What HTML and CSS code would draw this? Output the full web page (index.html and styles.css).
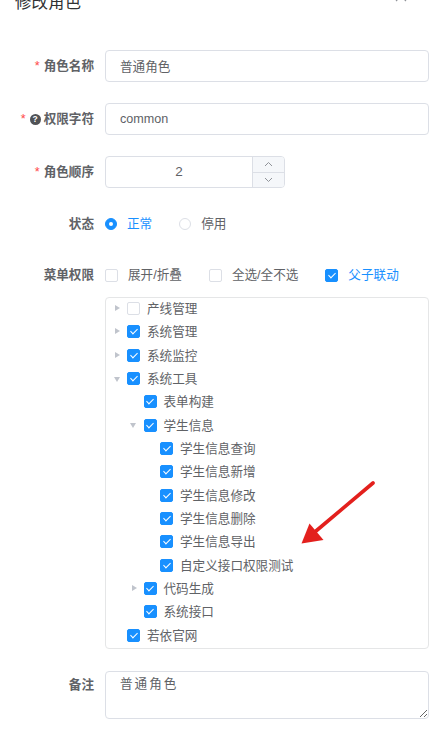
FILE: index.html
```html
<!DOCTYPE html>
<html lang="zh-CN">
<head>
<meta charset="utf-8">
<title>修改角色</title>
<link rel="stylesheet" href="styles.css">
</head>
<body>
<div class="dialog">
  <div class="header">
    <span class="title">修改角色</span>
    <svg class="close" width="12" height="12" viewBox="0 0 12 12"><path d="M1 1 L11 11 M11 1 L1 11" stroke="#909399" stroke-width="1.2" fill="none"/></svg>
  </div>

  <div class="form">
    <div class="item">
      <div class="label"><span class="req">*</span>角色名称</div>
      <div class="content"><input class="input" value="普通角色"></div>
    </div>

    <div class="item">
      <div class="label"><span class="req">*</span><span class="qicon">?</span>权限字符</div>
      <div class="content"><input class="input" value="common"></div>
    </div>

    <div class="item">
      <div class="label"><span class="req">*</span>角色顺序</div>
      <div class="content">
        <div class="number">
          <div class="num-value">2</div>
          <div class="num-btns">
            <div class="num-btn"><svg width="9" height="6" viewBox="0 0 9 6"><path d="M1 5 L4.5 1.5 L8 5" stroke="#909399" stroke-width="1" fill="none"/></svg></div>
            <div class="num-btn"><svg width="9" height="6" viewBox="0 0 9 6"><path d="M1 1 L4.5 4.5 L8 1" stroke="#909399" stroke-width="1" fill="none"/></svg></div>
          </div>
        </div>
      </div>
    </div>

    <div class="item status-item">
      <div class="label">状态</div>
      <div class="content options">
        <span class="radio on"></span><span class="opt-text active">正常</span>
        <span class="radio"></span><span class="opt-text">停用</span>
      </div>
    </div>

    <div class="item menu-item">
      <div class="label short">菜单权限</div>
      <div class="content">
        <div class="options short">
          <span class="cb"></span><span class="opt-text">展开/折叠</span>
          <span class="cb"></span><span class="opt-text">全选/全不选</span>
          <span class="cb on"></span><span class="opt-text active">父子联动</span>
        </div>
        <div class="tree">
          <div class="node"><span class="arrow right"></span><span class="cb"></span><span class="ntext">产线管理</span></div>
          <div class="node"><span class="arrow right"></span><span class="cb on"></span><span class="ntext">系统管理</span></div>
          <div class="node"><span class="arrow right"></span><span class="cb on"></span><span class="ntext">系统监控</span></div>
          <div class="node"><span class="arrow down"></span><span class="cb on"></span><span class="ntext">系统工具</span></div>
          <div class="node lv2"><span class="arrow"></span><span class="cb on"></span><span class="ntext">表单构建</span></div>
          <div class="node lv2"><span class="arrow down"></span><span class="cb on"></span><span class="ntext">学生信息</span></div>
          <div class="node lv3"><span class="arrow"></span><span class="cb on"></span><span class="ntext">学生信息查询</span></div>
          <div class="node lv3"><span class="arrow"></span><span class="cb on"></span><span class="ntext">学生信息新增</span></div>
          <div class="node lv3"><span class="arrow"></span><span class="cb on"></span><span class="ntext">学生信息修改</span></div>
          <div class="node lv3"><span class="arrow"></span><span class="cb on"></span><span class="ntext">学生信息删除</span></div>
          <div class="node lv3"><span class="arrow"></span><span class="cb on"></span><span class="ntext">学生信息导出</span></div>
          <div class="node lv3"><span class="arrow"></span><span class="cb on"></span><span class="ntext">自定义接口权限测试</span></div>
          <div class="node lv2"><span class="arrow right"></span><span class="cb on"></span><span class="ntext">代码生成</span></div>
          <div class="node lv2"><span class="arrow"></span><span class="cb on"></span><span class="ntext">系统接口</span></div>
          <div class="node"><span class="arrow"></span><span class="cb on"></span><span class="ntext">若依官网</span></div>
        </div>
      </div>
    </div>

    <div class="item">
      <div class="label remark">备注</div>
      <div class="content"><textarea class="textarea">普通角色</textarea></div>
    </div>
  </div>

  <svg class="annot" width="447" height="730" viewBox="0 0 447 730">
    <line x1="373" y1="493" x2="316" y2="541" stroke="#e3201d" stroke-width="3.6" stroke-linecap="round"/>
    <polygon points="301.5,553.5 309.5,533.5 323.5,550" fill="#e3201d"/>
  </svg>
</div>
</body>
</html>
```

FILE: styles.css
```css
* { box-sizing: border-box; }

html, body {
  margin: 0;
  padding: 0;
  background: #fff;
  overflow: hidden;
}

body {
  font-family: "Liberation Sans", "Noto Sans CJK SC", sans-serif;
  font-size: 12.6px;
  color: #606266;
}

.dialog {
  position: relative;
  width: 447px;
  height: 730px;
  padding-right: 18px;
}

.header {
  position: relative;
  margin-top: -10px;
  height: 25px;
  line-height: 24px;
  padding-left: 15px;
}

.title {
  font-size: 16.5px;
  color: #303133;
}

.close {
  position: absolute;
  right: 22px;
  top: 0;
}

.form {
  padding-top: 35px;
}

.item {
  display: flex;
  margin-bottom: 21px;
}

.status-item {
  margin-top: -1px;
}

.menu-item {
  margin-bottom: 22px;
}

.label {
  width: 105px;
  flex: none;
  padding-right: 11px;
  text-align: right;
  line-height: 30px;
  font-weight: bold;
  color: #606266;
  display: flex;
  justify-content: flex-end;
  align-items: center;
  height: 32px;
}

.label.short {
  height: 28px;
  line-height: 26px;
}

.label.remark {
  height: 28px;
}

.req {
  color: #ff4949;
  margin-right: 4px;
  font-weight: normal;
}

.qicon {
  display: inline-flex;
  width: 11px;
  height: 11px;
  border-radius: 50%;
  background: #505256;
  color: #fff;
  font-size: 8.5px;
  font-weight: bold;
  line-height: 11px;
  justify-content: center;
  align-items: center;
  margin-right: 3px;
}

.content {
  flex: 1;
  min-width: 0;
}

.input {
  display: block;
  width: 100%;
  height: 32px;
  border: 1px solid #dcdfe6;
  border-radius: 4px;
  padding: 0 14px 1px;
  font-family: inherit;
  font-size: 12.6px;
  color: #606266;
  outline: none;
  background: #fff;
}

.number {
  display: flex;
  width: 180px;
  height: 32px;
  border: 1px solid #dcdfe6;
  border-radius: 4px;
  overflow: hidden;
}

.num-value {
  flex: 1;
  text-align: center;
  line-height: 29px;
  font-size: 13.5px;
  color: #606266;
}

.num-btns {
  width: 32px;
  display: flex;
  flex-direction: column;
  border-left: 1px solid #dcdfe6;
  background: #f5f7fa;
}

.num-btn {
  flex: 1;
  display: flex;
  align-items: center;
  justify-content: center;
}

.num-btn + .num-btn {
  border-top: 1px solid #dcdfe6;
}

.options {
  display: flex;
  align-items: center;
  height: 32px;
}

.options.short {
  height: 28px;
}

.opt-text {
  margin-left: 10px;
  margin-right: 27px;
  color: #606266;
  position: relative;
  top: -1.5px;
}

.opt-text.active {
  color: #1890ff;
}

.radio {
  flex: none;
  width: 12px;
  height: 12px;
  border-radius: 50%;
  border: 1px solid #dcdfe6;
  background: #fff;
  position: relative;
}

.radio.on {
  border-color: #1890ff;
  background: #1890ff;
}

.radio.on::after {
  content: "";
  position: absolute;
  left: 3px;
  top: 3px;
  width: 4px;
  height: 4px;
  border-radius: 50%;
  background: #fff;
}

.cb {
  flex: none;
  width: 13px;
  height: 13px;
  border: 1px solid #dcdfe6;
  border-radius: 2px;
  background: #fff;
  position: relative;
}

.cb.on {
  background: #1890ff;
  border-color: #1890ff;
}

.cb.on::after {
  content: "";
  position: absolute;
  left: 3.5px;
  top: 1px;
  width: 3px;
  height: 6px;
  border: 1px solid #fff;
  border-left: 0;
  border-top: 0;
  transform: rotate(45deg);
}

.tree {
  margin-top: 8px;
  border: 1px solid #e5e6e7;
  border-radius: 4px;
  background: #fff;
}

.node {
  display: flex;
  align-items: center;
  height: 23.33px;
  position: relative;
  top: -1px;
}

.node.lv2 { padding-left: 16.5px; }
.node.lv3 { padding-left: 33px; }

.arrow {
  flex: none;
  width: 21px;
  height: 10px;
  position: relative;
}

.arrow.right::after {
  content: "";
  position: absolute;
  left: 9px;
  top: 1.5px;
  border-left: 5px solid #c0c4cc;
  border-top: 3.5px solid transparent;
  border-bottom: 3.5px solid transparent;
}

.arrow.down::after {
  content: "";
  position: absolute;
  left: 7.5px;
  top: 3px;
  border-top: 5px solid #c0c4cc;
  border-left: 3.5px solid transparent;
  border-right: 3.5px solid transparent;
}

.ntext {
  margin-left: 7px;
  color: #606266;
  position: relative;
  top: -1px;
}

.textarea {
  display: block;
  width: 100%;
  height: 48px;
  border: 1px solid #dcdfe6;
  border-radius: 4px;
  padding: 2px 14px;
  font-family: inherit;
  font-size: 12.6px;
  letter-spacing: 2px;
  line-height: 20px;
  color: #606266;
  resize: vertical;
  outline: none;
}

.annot {
  position: absolute;
  left: 0;
  top: 0;
  pointer-events: none;
}
```
